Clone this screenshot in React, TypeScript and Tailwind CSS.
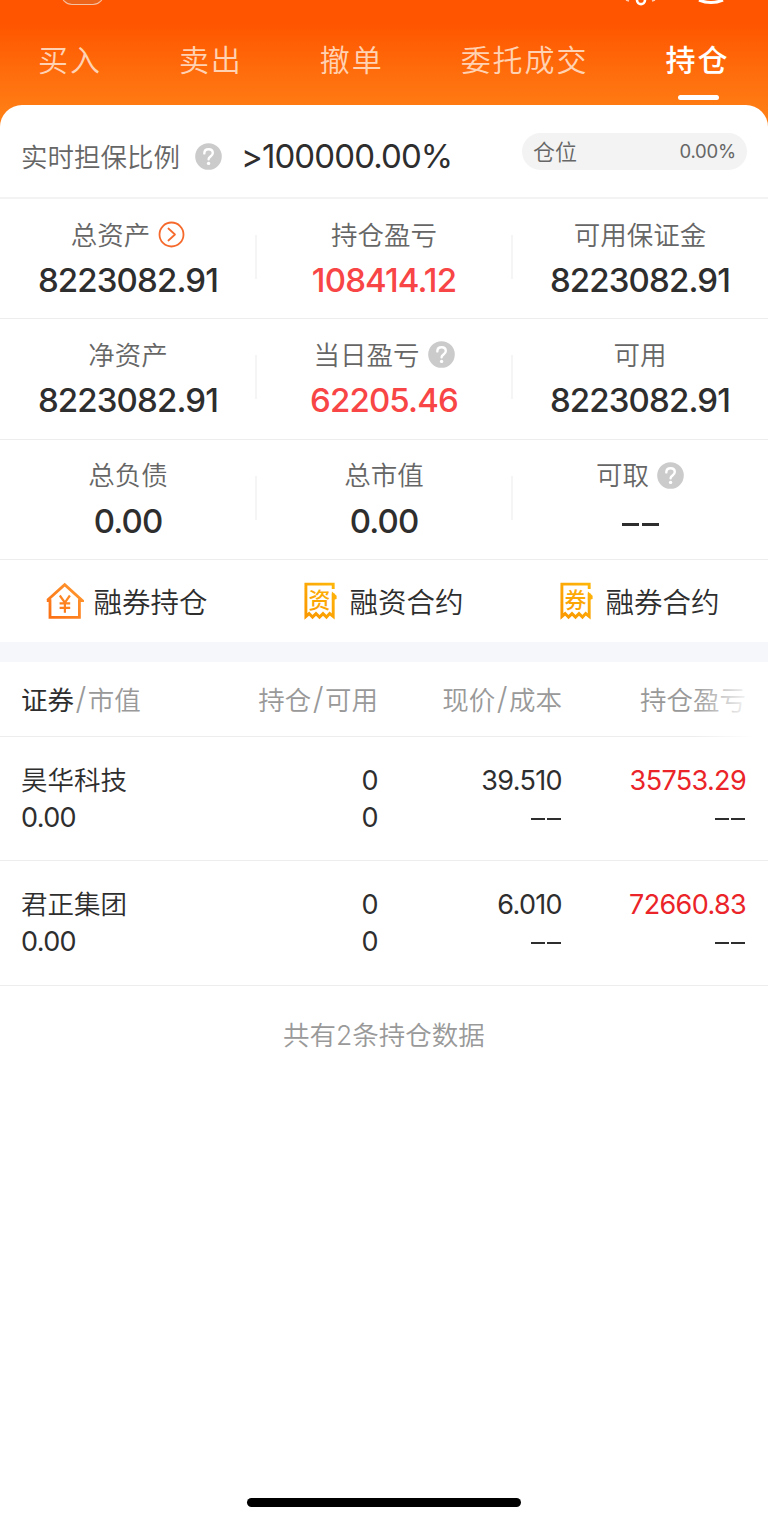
import clsx from "clsx";
import type { ReactNode } from "react";

const tabs = ["买入", "卖出", "撤单", "委托成交", "持仓"];

type Stat = { label: string; value: string; icon?: "arrow" | "help"; up?: boolean };

const stats: Stat[][] = [
  [
    { label: "总资产", value: "8223082.91", icon: "arrow" },
    { label: "持仓盈亏", value: "108414.12", up: true },
    { label: "可用保证金", value: "8223082.91" },
  ],
  [
    { label: "净资产", value: "8223082.91" },
    { label: "当日盈亏", value: "62205.46", icon: "help", up: true },
    { label: "可用", value: "8223082.91" },
  ],
  [
    { label: "总负债", value: "0.00" },
    { label: "总市值", value: "0.00" },
    { label: "可取", value: "--", icon: "help" },
  ],
];

const holdings = [
  { name: "昊华科技", marketValue: "0.00", position: "0", available: "0", price: "39.510", cost: "--", profit: "35753.29", rate: "--" },
  { name: "君正集团", marketValue: "0.00", position: "0", available: "0", price: "6.010", cost: "--", profit: "72660.83", rate: "--" },
];

function HelpIcon() {
  return (
    <svg width="27" height="27" viewBox="0 0 27 27" fill="none" className="shrink-0">
      <circle cx="13.5" cy="13.5" r="13.3" fill="#cbcbcb" />
      <path d="M9.3 10.4c0-2.5 1.8-4.1 4.3-4.1s4.2 1.6 4.2 3.8c0 3.3-4.2 3.5-4.2 6.2" stroke="#fff" strokeWidth="2.4" strokeLinecap="round" />
      <circle cx="13.6" cy="20.4" r="1.7" fill="#fff" />
    </svg>
  );
}

function ArrowIcon() {
  return (
    <svg width="27" height="27" viewBox="0 0 27 27" fill="none" stroke="#f56a2c" className="shrink-0">
      <circle cx="13.5" cy="13.5" r="12" strokeWidth="1.8" />
      <path d="M10.4 7.5l6.6 6-6.6 6" strokeWidth="1.7" strokeLinecap="round" strokeLinejoin="round" />
    </svg>
  );
}

function HouseIcon() {
  return (
    <svg width="38" height="38" viewBox="0 0 38 38" fill="none" stroke="url(#house)" strokeWidth="2.8" className="-ml-0.5">
      <defs>
        <linearGradient id="house" x1="4" y1="36" x2="34" y2="6" gradientUnits="userSpaceOnUse">
          <stop stopColor="#fb7014" />
          <stop offset="1" stopColor="#ff962e" />
        </linearGradient>
      </defs>
      <path d="M0.8 18.6h3.2V35.3h29.4V18.6h3L18.7 2.6 1.4 18.2" />
      <path d="M13.8 13.5l5.1 7.2 5-7.2M18.9 20.7v10.1M13.6 21.4h10.6M13.6 25.9h10.6" strokeWidth="2.2" />
    </svg>
  );
}

function ContractIcon({ id, char }: { id: string; char: string }) {
  return (
    <svg width="33" height="38" viewBox="0 0 33 38" fill="none">
      <defs>
        <linearGradient id={id} x1="0" y1="38" x2="33" y2="0" gradientUnits="userSpaceOnUse">
          <stop stopColor="#f99500" />
          <stop offset="1" stopColor="#ffb80a" />
        </linearGradient>
      </defs>
      <path d="M29.2 7V2.1H1.9V34.5l3.2-2.9 3.4 3.5 3.5-3.5 3.5 3.5 3.5-3.5 3.5 3.5 3.2-3.5 3.5 2.9V11.5" stroke={`url(#${id})`} strokeWidth="2.9" />
      <path d="M27.9 9.5l4.7 4.2v3.3l-4.7 1.2z" fill={`url(#${id})`} />
      <text x="15.4" y="25.6" textAnchor="middle" fontSize="22" className="font-medium" fill={`url(#${id})`}>
        {char}
      </text>
    </svg>
  );
}

const links: { label: string; icon: ReactNode }[] = [
  { label: "融券持仓", icon: <HouseIcon /> },
  { label: "融资合约", icon: <ContractIcon id="financing" char="资" /> },
  { label: "融券合约", icon: <ContractIcon id="lending" char="券" /> },
];

function StatCell({ stat, last }: { stat: Stat; last: boolean }) {
  return (
    <div className="relative flex flex-col items-center pt-[15.5px]">
      <div className="flex h-10 items-center gap-2 text-[26.5px] text-[#666]">
        <span className="pt-0.5">{stat.label}</span>
        {stat.icon === "arrow" && <ArrowIcon />}
        {stat.icon === "help" && <HelpIcon />}
      </div>
      {stat.value === "--" ? (
        <Dashes big />
      ) : (
        <div className={clsx("mt-[5.5px] h-10 text-[33px] leading-10 font-medium tracking-[-0.85px]", stat.up ? "text-[#f84545]" : "text-[#2e2e2e]")}>
          {stat.value}
        </div>
      )}
      {!last && <span className="absolute top-9 -right-px h-11 w-0.5 bg-[#f5f5f5]" />}
    </div>
  );
}

// Empty value placeholder
function Dashes({ big }: { big?: boolean }) {
  return (
    <div className={clsx("flex items-center justify-end text-[#2e2e2e]", big ? "mt-[7px] h-11" : "h-[37px] pt-[3px] pr-px")}>
      <span className={big ? "flex gap-[3px]" : "flex gap-0.5"}>
        <span className={big ? "h-[3px] w-[17px] bg-current" : "h-0.5 w-3.5 bg-current"} />
        <span className={big ? "h-[3px] w-[17px] bg-current" : "h-0.5 w-3.5 bg-current"} />
      </span>
    </div>
  );
}

function Value({ children, className }: { children: string; className?: string }) {
  if (children === "--") return <Dashes />;
  return <div className={clsx("h-[37px] text-[27px] leading-[37px] font-normal tracking-[-0.65px]", className)}>{children}</div>;
}

function Slash() {
  return <span className="mx-[1.5px] text-[31px] leading-none font-light">/</span>;
}

export default function App() {
  return (
    <div className="flex h-[1522px] w-[768px] flex-col overflow-hidden bg-white font-['Inter','Noto_Sans_CJK_SC',sans-serif] font-[350] text-[#2e2e2e]">
      <header className="relative h-[130px] shrink-0 bg-linear-to-b from-[#ff5500] from-[18%] to-[#ff7f15] to-[90%]">
        <div className="absolute -top-6 left-[61px] h-[29px] w-[43px] rounded-[11px] border border-white/60 bg-[#ec641a]" />
        <svg width="120" height="8" viewBox="0 0 120 8" fill="none" stroke="#fff" className="absolute top-0 left-[620px]">
          <path d="M17 0c0 5.5 8 5.5 8 0" strokeWidth="2.6" />
          <path d="M6 0l3 1M32 1l3-1" strokeWidth="1.5" opacity=".7" />
          <path d="M79 0q12 5 24 0" strokeWidth="3" />
        </svg>
        <nav className="flex justify-between pt-[37px] pr-[38.5px] pl-[38px] text-[30px] leading-[46px] tracking-[2px]">
          {tabs.map((tab) => (
            <div key={tab} className={clsx("relative", tab === "持仓" ? "font-medium text-white" : "text-[#ffd2b4]")}>
              {tab}
              {tab === "持仓" && <span className="absolute top-[58px] left-3 h-[5px] w-[41px] rounded-full bg-white" />}
            </div>
          ))}
        </nav>
      </header>

      <main className="relative -mt-[25px] flex flex-1 flex-col rounded-t-[22px] bg-white">
        <section className="flex h-[94px] shrink-0 items-center border-b-2 border-[#f3f3f3] pt-[10px] pr-[21px] pl-[21px]">
          <span className="pt-[3px] text-[26.5px] text-[#666]">实时担保比例</span>
          <span className="ml-[15px]"><HelpIcon /></span>
          <span className="ml-[19px] pt-px text-[33px] font-normal tracking-[-0.9px]">&gt;100000.00%</span>
          <div className="-mt-[9px] ml-auto flex h-[37px] w-[225px] items-center justify-between rounded-full bg-[#f3f3f3] pr-[11px] pl-[11px] text-[#666]">
            <span className="pt-0.5 text-[22px]">仓位</span>
            <span className="text-[18.5px] font-normal tracking-[-0.2px]">0.00%</span>
          </div>
        </section>

        {stats.map((row, i) => (
          <section key={i} className="grid h-[120.3px] shrink-0 grid-cols-3 border-b border-[#ededed]">
            {row.map((stat, j) => (
              <StatCell key={stat.label} stat={stat} last={j === 2} />
            ))}
          </section>
        ))}

        <section className="grid h-[82.5px] shrink-0 grid-cols-3">
          {links.map((link) => (
            <div key={link.label} className="flex items-center justify-center gap-[9px] text-[28.5px]">
              {link.icon}
              <span className={clsx("pt-1", link.label !== "融券持仓" && "ml-[3px]")}>{link.label}</span>
            </div>
          ))}
        </section>

        <div className="h-5 shrink-0 bg-[#f5f7fa]" />

        <section className="relative grid h-[74.5px] shrink-0 grid-cols-[173px_184px_184px_184px] items-center border-b border-[#ededed] pt-[3px] pl-[21px] text-[26.5px] text-[#999]">
          <div>
            <span className="font-normal text-[#2e2e2e]">证券</span>
            <Slash />
            市值
          </div>
          <div className="text-right">
            持仓
            <Slash />
            可用
          </div>
          <div className="text-right">
            现价
            <Slash />
            成本
          </div>
          <div className="text-right">持仓盈亏</div>
          <div className="absolute top-0 right-0 -bottom-px w-[74px] bg-linear-to-r from-white/0 to-white to-80%" />
        </section>

        {holdings.map((h) => (
          <section key={h.name} className="grid h-[124.5px] shrink-0 grid-cols-[173px_184px_184px_184px] border-b border-[#ededed] pt-[25px] pl-[21px]">
            <div>
              <div className="h-[37px] text-[26.5px] leading-[37px]">{h.name}</div>
              <Value>{h.marketValue}</Value>
            </div>
            <div className="text-right">
              <Value>{h.position}</Value>
              <Value>{h.available}</Value>
            </div>
            <div className="text-right">
              <Value>{h.price}</Value>
              <Value>{h.cost}</Value>
            </div>
            <div className="text-right">
              <Value className="text-[#ea2428]">{h.profit}</Value>
              <Value>{h.rate}</Value>
            </div>
          </section>
        ))}

        <p className="mt-[29px] text-center text-[26.5px] leading-10 text-[#999]">共有2条持仓数据</p>

        <div className="mx-auto mt-auto mb-[15px] h-[9px] w-[274px] shrink-0 rounded-full bg-black" />
      </main>
    </div>
  );
}
